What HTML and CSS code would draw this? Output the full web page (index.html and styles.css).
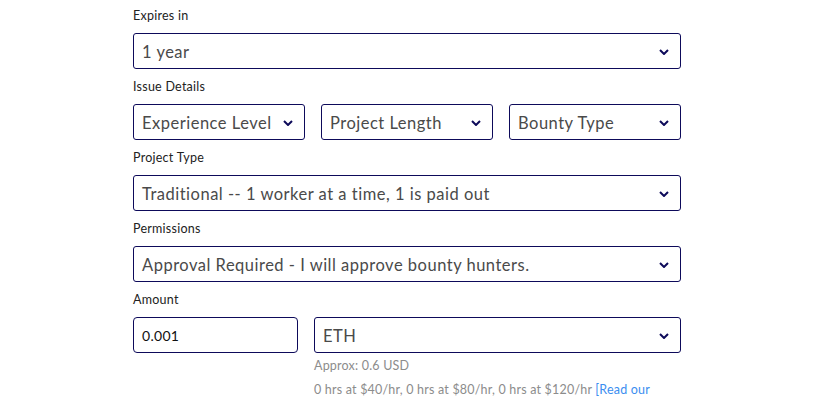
FILE: index.html
```html
<!DOCTYPE html>
<html>
<head>
<meta charset="utf-8">
<link rel="stylesheet" href="styles.css">
</head>
<body>
<form class="form">
  <div class="field">
    <div class="label">Expires in</div>
    <div class="select"><span>1 year</span><svg class="chev" viewBox="0 0 10 6"><path d="M1 1l4 4 4-4"/></svg></div>
  </div>
  <div class="field">
    <div class="label">Issue Details</div>
    <div class="row3">
      <div class="select"><span>Experience Level</span><svg class="chev" viewBox="0 0 10 6"><path d="M1 1l4 4 4-4"/></svg></div>
      <div class="select"><span>Project Length</span><svg class="chev" viewBox="0 0 10 6"><path d="M1 1l4 4 4-4"/></svg></div>
      <div class="select"><span>Bounty Type</span><svg class="chev" viewBox="0 0 10 6"><path d="M1 1l4 4 4-4"/></svg></div>
    </div>
  </div>
  <div class="field">
    <div class="label">Project Type</div>
    <div class="select"><span>Traditional -- 1 worker at a time, 1 is paid out</span><svg class="chev" viewBox="0 0 10 6"><path d="M1 1l4 4 4-4"/></svg></div>
  </div>
  <div class="field">
    <div class="label">Permissions</div>
    <div class="select"><span>Approval Required - I will approve bounty hunters.</span><svg class="chev" viewBox="0 0 10 6"><path d="M1 1l4 4 4-4"/></svg></div>
  </div>
  <div class="field">
    <div class="label">Amount</div>
    <div class="amount">
      <div class="input">0.001</div>
      <div class="currency">
        <div class="select"><span>ETH</span><svg class="chev" viewBox="0 0 10 6"><path d="M1 1l4 4 4-4"/></svg></div>
        <div class="hint">Approx: 0.6 USD</div>
        <div class="hint hrs">0 hrs at $40/hr, 0 hrs at $80/hr, 0 hrs at $120/hr <a class="link">[Read our</a></div>
      </div>
    </div>
  </div>
</form>
</body>
</html>
```

FILE: styles.css
```css
html, body { margin: 0; padding: 0; background: #fff; }
body { font-family: Lato, "Noto Sans", sans-serif; color: #333; }
.form { width: 548px; margin-left: 133px; padding-top: 8px; }
.label { font-size: 12.5px; line-height: 16px; height: 16px; color: #222; margin-bottom: 9px; letter-spacing: 0.25px; }
.select {
  box-sizing: border-box; height: 36px; border: 1px solid #0d0a5a; border-radius: 3px;
  display: flex; align-items: center; justify-content: space-between;
  padding: 2px 11px 0 8px; font-size: 16.5px; color: #4a4a4a; margin-bottom: 10px;
  letter-spacing: 0.5px;
}
.select span { white-space: nowrap; }
.chev { width: 10px; height: 6px; flex: none; }
.chev path { fill: none; stroke: #0d0a5a; stroke-width: 2; }
.row3 { display: grid; grid-template-columns: repeat(3, 1fr); gap: 16px; }
.amount { display: grid; grid-template-columns: 165px 1fr; gap: 16px; }
.input {
  box-sizing: border-box; height: 36px; border: 1px solid #0d0a5a; border-radius: 4px;
  display: flex; align-items: center; padding: 1px 8px 0; font-size: 14px; color: #111;
  letter-spacing: 0.3px;
}
.currency .select { margin-bottom: 5px; }
.hint { font-size: 12.5px; color: #8c8c8c; line-height: 16px; letter-spacing: 0.2px; }
.hrs { margin-top: 8px; }
.link { color: #3b8ef0; }
```
